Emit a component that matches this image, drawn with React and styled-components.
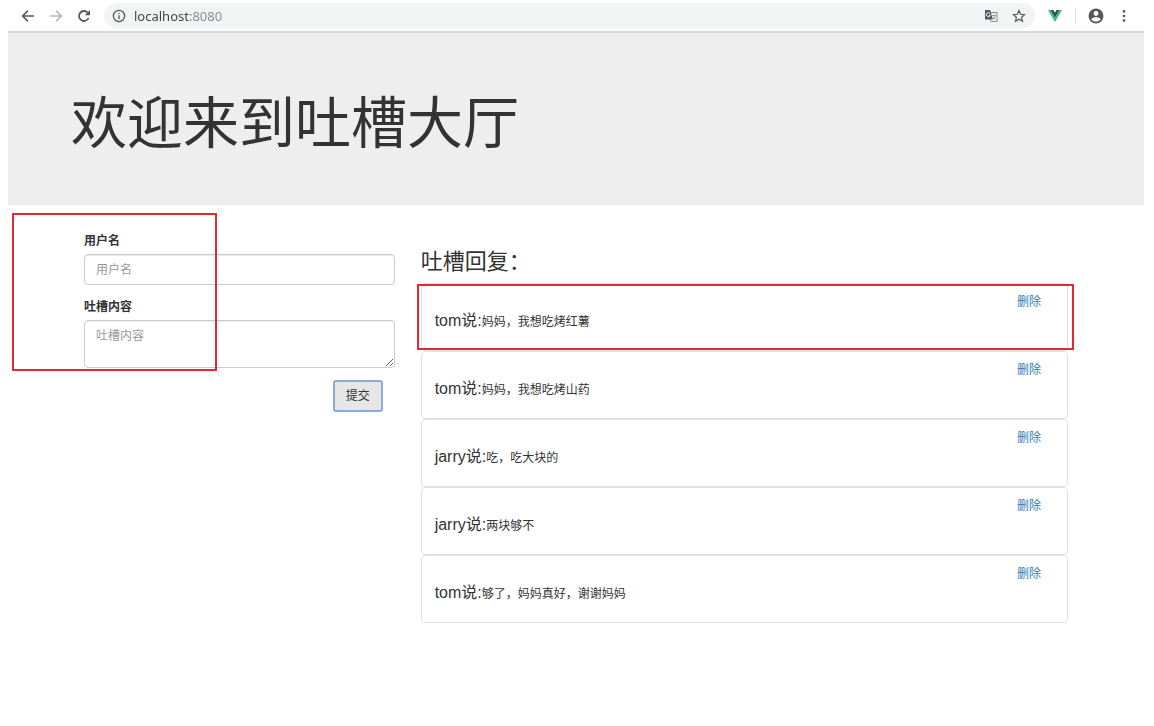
import React, { useState } from 'react';
import styled, { createGlobalStyle } from 'styled-components';

const GlobalStyle = createGlobalStyle`
  * {
    box-sizing: border-box;
  }

  body {
    margin: 0;
    background: #fff;
    color: #333;
    font-family: "Liberation Sans", "Noto Sans CJK SC", sans-serif;
    font-size: 12px;
    line-height: 18px;
  }
`;

const Page = styled.div`
  padding: 0 10px 0 8px;
`;

const Toolbar = styled.nav`
  display: flex;
  align-items: center;
  height: 33px;
  padding: 0 4px 0 8px;
  border-bottom: 2px solid #d6d7d8;
`;

const IconButton = styled.button`
  display: flex;
  align-items: center;
  justify-content: center;
  width: ${({ $width }) => $width || 24}px;
  height: 24px;
  padding: 0;
  border: 0;
  background: none;
  color: ${({ $muted }) => ($muted ? '#b4b6b8' : '#55585c')};
`;

const NavButtons = styled.div`
  display: flex;
  gap: 4px;
  margin-right: 8px;
`;

const AddressBar = styled.div`
  display: flex;
  flex: 1;
  align-items: center;
  height: 25px;
  padding: 0 4px 0 8px;
  border-radius: 13px;
  background: #f1f3f4;
  color: #55585c;
`;

const Address = styled.input`
  flex: 1;
  min-width: 0;
  margin-left: 8px;
  padding: 0;
  border: 0;
  outline: 0;
  color: transparent;
  caret-color: #333;
  background: linear-gradient(90deg, #3c4043 56px, #85898d 56px);
  background-clip: text;
  -webkit-background-clip: text;
  font-family: "Noto Sans", sans-serif;
  font-size: 13px;
  line-height: 20px;
`;

const Divider = styled.span`
  width: 1px;
  height: 14px;
  margin-right: 8px;
  background: #dcdee0;
`;

const Container = styled.div`
  max-width: 1010px;
  margin: 0 auto;
`;

const Jumbotron = styled.header`
  padding: 59px 0 49px;
  background: #eee;
`;

const Title = styled.h1`
  margin: 0;
  font-size: 56px;
  line-height: 64px;
  font-weight: 400;
`;

const Columns = styled(Container)`
  display: grid;
  grid-template-columns: 1fr 2fr;
`;

const FormColumn = styled.form`
  position: relative;
  padding: 26px 13px 0;
`;

const Field = styled.div`
  margin-bottom: 12px;
`;

const Label = styled.label`
  display: block;
  margin-bottom: 3px;
  line-height: 20px;
  font-weight: 700;
`;

const Input = styled.input`
  display: block;
  width: 100%;
  height: ${({ $height }) => $height}px;
  padding: 6px 11px;
  border: 1px solid #ccc;
  border-radius: 4px;
  background: #fff;
  color: #555;
  font: inherit;
  box-shadow: inset 0 1px 1px rgba(0, 0, 0, 0.075);

  &::placeholder {
    color: #999;
  }
`;

const FormFooter = styled.div`
  display: flex;
  justify-content: flex-end;
  padding-right: 12px;
`;

const SubmitButton = styled.button`
  height: 32px;
  padding: 0 11px;
  border: 2px solid #8aa9dc;
  border-radius: 3px;
  background: #e6e6e6;
  color: #333;
  font: inherit;
`;

const ListColumn = styled.section`
  padding: 44px 13px 0;
`;

const ListTitle = styled.h3`
  margin: 0 0 8px;
  font-size: 22px;
  line-height: 26px;
  font-weight: 400;
`;

const List = styled.ul`
  margin: 0;
  padding: 0;
  list-style: none;
`;

const Item = styled.li`
  position: relative;
  display: flex;
  align-items: flex-start;
  justify-content: space-between;
  height: 68px;
  padding: 9px 26px 0 13px;
  border: 1px solid #e2e2e2;
  border-radius: 4px;
`;

const Message = styled.p`
  margin: 18px 0 0;
  line-height: 20px;
`;

const Author = styled.span`
  font-size: 16px;
`;

const DeleteLink = styled.a`
  color: #337ab7;
  text-decoration: none;
`;

const Marker = styled.div`
  position: absolute;
  border: 2px solid #e02b33;
  pointer-events: none;
`;

const FormMarker = styled(Marker)`
  top: 8px;
  left: -59px;
  width: 205px;
  height: 158px;
`;

const ItemMarker = styled(Marker)`
  inset: 0 -7px 0 -5px;
`;

const BackIcon = () => (
  <svg width="14" height="14" viewBox="0 0 14 14" fill="none" stroke="currentColor" strokeWidth="1.6">
    <path d="M13 7H2M7 1.6L1.6 7L7 12.4" />
  </svg>
);

const ForwardIcon = () => (
  <svg width="14" height="14" viewBox="0 0 14 14" fill="none" stroke="currentColor" strokeWidth="1.5">
    <path d="M1 7H12M7 1.6L12.4 7L7 12.4" />
  </svg>
);

const ReloadIcon = () => (
  <svg width="14" height="14" viewBox="0 0 14 14">
    <path d="M11.6 9A5 5 0 1 1 10.7 3.6" fill="none" stroke="currentColor" strokeWidth="1.8" />
    <path d="M13 1V6.2H7.8Z" fill="currentColor" />
  </svg>
);

const InfoIcon = () => (
  <svg width="14" height="14" viewBox="0 0 14 14" fill="none" stroke="currentColor" strokeWidth="1.3">
    <circle cx="7" cy="7" r="5.6" />
    <path d="M7 6.3V10.2M7 3.8V5.1" />
  </svg>
);

const TranslateIcon = () => (
  <svg width="14" height="14" viewBox="0 0 14 14" fill="none">
    <path d="M5 3.5H13V12.5H7L5 9.5Z" fill="#f1f3f4" stroke="#8a8d90" strokeWidth="1" />
    <path d="M8 6.5H12M10 5.5V6.5M11.3 6.5C11 8.3 9.8 9.6 8.4 10.3M9 7.8C9.6 9 10.5 9.8 11.6 10.3" stroke="#8a8d90" strokeWidth="0.8" />
    <path d="M1 1H6.2L8.8 10.5H1Z" fill="#55585c" />
    <path d="M6 4.5A2 2 0 1 0 6.3 6.2H4.6" stroke="#f1f3f4" strokeWidth="1" />
  </svg>
);

const StarIcon = () => (
  <svg width="14" height="14" viewBox="0 0 14 14" fill="none" stroke="currentColor" strokeWidth="1.2">
    <path d="M7 1.6L8.6 5.3L12.6 5.7L9.6 8.3L10.5 12.3L7 10.2L3.5 12.3L4.4 8.3L1.4 5.7L5.4 5.3Z" />
  </svg>
);

const VueIcon = () => (
  <svg width="14" height="12" viewBox="0 0 14 12">
    <path d="M0 0H3.4L7 6.4L10.6 0H14L7 12Z" fill="#41b883" />
    <path d="M2.8 0H5.4L7 2.8L8.6 0H11.2L7 7.3Z" fill="#35495e" />
  </svg>
);

const ProfileIcon = () => (
  <svg width="16" height="16" viewBox="0 0 16 16">
    <circle cx="8" cy="8" r="7.5" fill="currentColor" />
    <circle cx="8" cy="5.5" r="2.4" fill="#fff" />
    <path d="M3.3 11.2C4.3 9.7 6.3 9.2 8 9.2S11.7 9.7 12.7 11.2C11.6 12.7 10 13.6 8 13.6S4.4 12.7 3.3 11.2Z" fill="#fff" />
  </svg>
);

const MenuIcon = () => (
  <svg width="4" height="14" viewBox="0 0 4 14" fill="currentColor">
    <circle cx="2" cy="2.4" r="1.3" />
    <circle cx="2" cy="7" r="1.3" />
    <circle cx="2" cy="11.6" r="1.3" />
  </svg>
);

const initialComments = [
  { id: 1, name: 'tom', content: '妈妈，我想吃烤红薯' },
  { id: 2, name: 'tom', content: '妈妈，我想吃烤山药' },
  { id: 3, name: 'jarry', content: '吃，吃大块的' },
  { id: 4, name: 'jarry', content: '两块够不' },
  { id: 5, name: 'tom', content: '够了，妈妈真好，谢谢妈妈' },
];

function BrowserBar() {
  return (
    <Toolbar>
      <NavButtons>
        <IconButton aria-label="Back"><BackIcon /></IconButton>
        <IconButton aria-label="Forward" $muted><ForwardIcon /></IconButton>
        <IconButton aria-label="Reload"><ReloadIcon /></IconButton>
      </NavButtons>
      <AddressBar>
        <InfoIcon />
        <Address aria-label="Address" defaultValue="localhost:8080" />
        <IconButton aria-label="Translate" $width={32}><TranslateIcon /></IconButton>
        <IconButton aria-label="Bookmark"><StarIcon /></IconButton>
      </AddressBar>
      <IconButton aria-label="Vue devtools" $width={40}><VueIcon /></IconButton>
      <Divider />
      <IconButton aria-label="Profile"><ProfileIcon /></IconButton>
      <IconButton aria-label="Menu" $width={32}><MenuIcon /></IconButton>
    </Toolbar>
  );
}

export default function App() {
  const [comments, setComments] = useState(initialComments);
  const [name, setName] = useState('');
  const [content, setContent] = useState('');

  const addComment = (e) => {
    e.preventDefault();
    if (!name || !content) return;
    setComments([{ id: Date.now(), name, content }, ...comments]);
    setName('');
    setContent('');
  };

  const removeComment = (e, id) => {
    e.preventDefault();
    setComments(comments.filter((c) => c.id !== id));
  };

  return (
    <Page>
      <GlobalStyle />
      <BrowserBar />
      <Jumbotron>
        <Container>
          <Title>欢迎来到吐槽大厅</Title>
        </Container>
      </Jumbotron>
      <Columns as="main">
        <FormColumn onSubmit={addComment}>
          <Field>
            <Label htmlFor="name">用户名</Label>
            <Input id="name" $height={31} placeholder="用户名" value={name} onChange={(e) => setName(e.target.value)} />
          </Field>
          <Field>
            <Label htmlFor="content">吐槽内容</Label>
            <Input as="textarea" id="content" $height={48} placeholder="吐槽内容" value={content} onChange={(e) => setContent(e.target.value)} />
          </Field>
          <FormFooter>
            <SubmitButton type="submit">提交</SubmitButton>
          </FormFooter>
          <FormMarker />
        </FormColumn>
        <ListColumn>
          <ListTitle>吐槽回复：</ListTitle>
          <List>
            {comments.map((c, i) => (
              <Item key={c.id}>
                <Message><Author>{c.name}说:</Author>{c.content}</Message>
                <DeleteLink href="#" onClick={(e) => removeComment(e, c.id)}>删除</DeleteLink>
                {i === 0 && <ItemMarker />}
              </Item>
            ))}
          </List>
        </ListColumn>
      </Columns>
    </Page>
  );
}
